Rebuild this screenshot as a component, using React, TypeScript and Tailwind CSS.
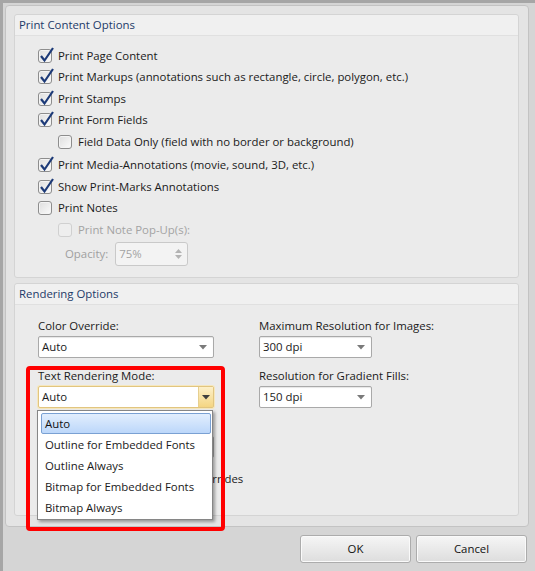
import React from "react";

const FONT = "font-['Open_Sans','Noto_Sans',sans-serif]";

function Check({ checked = false, disabled = false }: { checked?: boolean; disabled?: boolean }) {
  return (
    <span className="relative block w-[14px] h-[14px] shrink-0">
      <span
        className={
          disabled
            ? "absolute inset-0 rounded-[3px] border border-[#d0d0d0] bg-[#eeeeee]"
            : "absolute inset-0 rounded-[3px] border border-[#8d8d8d] bg-gradient-to-br from-[#dedede] to-[#fbfbfb] shadow-[inset_0_0_0_1px_#f4f4f4]"
        }
      />
      {checked && (
        <svg className="absolute left-0 top-[-3px] w-[17px] h-[17px]" viewBox="0 0 17 17">
          <path d="M3 10 L6.5 14.5 L15 2" stroke="#1c3a78" strokeWidth="2.2" fill="none" strokeLinejoin="miter" />
        </svg>
      )}
    </span>
  );
}

function Row({
  label,
  checked,
  disabled,
  indent,
  extra = "",
}: {
  label: string;
  checked?: boolean;
  disabled?: boolean;
  indent?: boolean;
  extra?: string;
}) {
  return (
    <div className={`flex items-center h-[21.5px] gap-[6px] ${indent ? "ml-[20px]" : ""} ${extra}`}>
      <Check checked={checked} disabled={disabled} />
      <span className={disabled ? "text-[#a3a3a3] whitespace-nowrap" : "text-[#1a1a1a] whitespace-nowrap"}>{label}</span>
    </div>
  );
}

function Arrow({ dark = false }: { dark?: boolean }) {
  return (
    <svg width="8" height="5" viewBox="0 0 8 5">
      <path d="M0 0 L8 0 L4 4.5 Z" fill={dark ? "#3f3f3f" : "#7a7a7a"} />
    </svg>
  );
}

function Combo({ value, width, focused = false }: { value: string; width: string; focused?: boolean }) {
  if (focused) {
    return (
      <div className={`${width} h-[22px] flex rounded-[2px] border border-[#e1c580] bg-white shadow-[0_0_0_1px_#f6e7bd]`}>
        <div className="flex-1 flex items-center pl-[3px] text-[#1a1a1a]">{value}</div>
        <div className="w-[15px] flex items-center justify-center border-l border-[#e6cf8f] bg-gradient-to-b from-[#fdf0c8] to-[#f4d582]">
          <Arrow dark />
        </div>
      </div>
    );
  }
  return (
    <div className={`${width} h-[22px] flex items-center justify-between rounded-[2px] border border-[#a9a9a9] bg-white pl-[3px] pr-[6px] shadow-[inset_0_1px_1px_#e6e6e6]`}>
      <span className="text-[#1a1a1a]">{value}</span>
      <Arrow />
    </div>
  );
}

function GroupHeader({ title }: { title: string }) {
  return (
    <div className="h-[21px] flex items-center px-[4px] bg-[#f0f0f0] border-b border-[#e0e0e0] rounded-t-[3px] text-[#1d3a68]">
      {title}
    </div>
  );
}

function Button({ label }: { label: string }) {
  return (
    <div className="w-[111px] h-[28px] flex items-center justify-center rounded-[3px] border border-[#acacac] bg-gradient-to-b from-[#f6f6f6] to-[#dddddd] shadow-[inset_0_0_0_1px_#fafafa] text-[#111]">
      {label}
    </div>
  );
}

const items = ["Auto", "Outline for Embedded Fonts", "Outline Always", "Bitmap for Embedded Fonts", "Bitmap Always"];

export default function App() {
  return (
    <div className={`relative w-[535px] h-[571px] overflow-hidden bg-[#d5d5d5] shadow-[inset_3px_3px_0_#a6a6a6] ${FONT} text-[11.4px] leading-[16px]`}>
      <div className="ml-[5px] mt-[5px] w-[524px] h-[522px] rounded-[4px] border border-[#c3c3c3] bg-[#e4e4e4] pl-[8px] pr-[9px] pt-[8px] flex flex-col gap-[5px]">
        {/* Print Content Options */}
        <div className="h-[264px] rounded-[3px] border border-[#d4d4d4] bg-[#ebebeb] flex flex-col">
          <GroupHeader title="Print Content Options" />
          <div className="pl-[23px] pt-[9px] flex flex-col">
            <Row label="Print Page Content" checked />
            <Row label="Print Markups (annotations such as rectangle, circle, polygon, etc.)" checked />
            <Row label="Print Stamps" checked />
            <Row label="Print Form Fields" checked />
            <Row label="Field Data Only (field with no border or background)" indent />
            <Row label="Print Media-Annotations (movie, sound, 3D, etc.)" checked extra="mt-[2px]" />
            <Row label="Show Print-Marks Annotations" checked />
            <Row label="Print Notes" />
            <Row label="Print Note Pop-Up(s):" indent disabled />
            <div className="flex items-center mt-[1.5px] ml-[27px] gap-[7px]">
              <span className="text-[#a0a0a0]">Opacity:</span>
              <div className="w-[73px] h-[24px] flex items-center justify-between rounded-[3px] border border-[#c9c9c9] bg-[#f3f3f3] pl-[3px] pr-[5px]">
                <span className="text-[#a3a3a3]">75%</span>
                <div className="flex flex-col gap-[2px]">
                  <svg width="7" height="4" viewBox="0 0 7 4"><path d="M0 4 L7 4 L3.5 0 Z" fill="#b3b3b3" /></svg>
                  <svg width="7" height="4" viewBox="0 0 7 4"><path d="M0 0 L7 0 L3.5 4 Z" fill="#b3b3b3" /></svg>
                </div>
              </div>
            </div>
          </div>
        </div>

        {/* Rendering Options */}
        <div className="h-[233px] rounded-[3px] border border-[#d4d4d4] bg-[#ebebeb] flex flex-col">
          <GroupHeader title="Rendering Options" />
          <div className="pl-[23px] pt-[13px] flex gap-[45px]">
            <div className="w-[176px] flex flex-col">
              <div className="h-[16px] mb-[2px] text-[#1a1a1a]">Color Override:</div>
              <Combo value="Auto" width="w-[176px]" />
              <div className="h-[16px] mb-[2px] mt-[10px] text-[#1a1a1a]">Text Rendering Mode:</div>
              <Combo value="Auto" width="w-[176px]" focused />
              <div className="mt-[28px] h-[22px] w-[177px] -ml-[1px] rounded-[2px] border border-[#a9a9a9] bg-white" />
              <Row label="Use the Document Color Overrides" extra="mt-[10px]" />
            </div>
            <div className="w-[113px] flex flex-col">
              <div className="h-[16px] mb-[2px] text-[#1a1a1a] whitespace-nowrap">Maximum Resolution for Images:</div>
              <Combo value="300 dpi" width="w-[113px]" />
              <div className="h-[16px] mb-[2px] mt-[10px] text-[#1a1a1a] whitespace-nowrap">Resolution for Gradient Fills:</div>
              <Combo value="150 dpi" width="w-[113px]" />
            </div>
          </div>
        </div>
      </div>

      <div className="flex justify-end gap-[5px] pr-[8px] mt-[8px]">
        <Button label="OK" />
        <Button label="Cancel" />
      </div>

      {/* Dropdown list overlay */}
      <div className="absolute left-[37px] top-[410px] w-[176px] h-[110px] border border-[#868686] bg-white shadow-[2px_2px_3px_rgba(0,0,0,0.35)] pl-[3px] pr-[1px] pt-[2px] flex flex-col">
        {items.map((it, i) => (
          <div
            key={it}
            className={
              i === 0
                ? "h-[21px] flex items-center pl-[3px] rounded-[2px] border border-[#7aa1d3] bg-gradient-to-b from-[#e2eefd] to-[#bcd7fa] text-[#111]"
                : "h-[21px] flex items-center pl-[4px] text-[#1a1a1a] whitespace-nowrap"
            }
          >
            {it}
          </div>
        ))}
      </div>

      {/* Red highlight */}
      <div className="absolute left-[26px] top-[366px] w-[199px] h-[165px] border-[4px] border-[#ff0000] rounded-[4px] pointer-events-none" />
    </div>
  );
}
